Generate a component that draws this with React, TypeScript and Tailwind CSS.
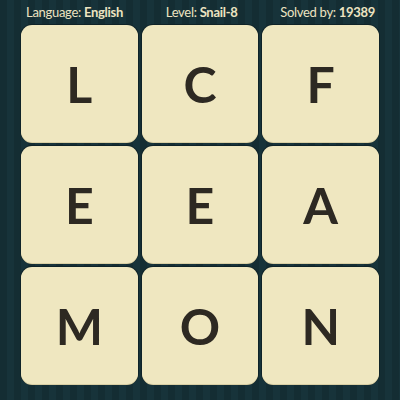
import React from 'react'

const letters = ['L', 'C', 'F', 'E', 'E', 'A', 'M', 'O', 'N']

const Tile: React.FC<{ letter: string }> = ({ letter }) => (
  <div className="h-[117px] rounded-[11px] bg-[#efe7c0] shadow-[0_1px_0_#d9cfa4,0_0_0_1px_#0f2328] flex items-center justify-center">
    <span className="text-[50px] leading-none font-bold text-[#2d2922] [font-family:Lato,'Liberation_Sans',sans-serif]">
      {letter}
    </span>
  </div>
)

const App: React.FC = () => {
  return (
    <div className="w-[400px] h-[400px] flex flex-col bg-[#163136] bg-[repeating-linear-gradient(90deg,#142d33_0px,#142d33_7px,#17333a_7px,#17333a_14px)] [font-family:Lato,'Liberation_Sans',sans-serif]">
      <div className="h-[25px] flex items-center justify-between pl-[26px] pr-[25px] text-[13px] tracking-[-0.3px] text-[#ece3c1]">
        <span>
          Language: <b className="font-bold">English</b>
        </span>
        <span>
          Level: <b className="font-bold">Snail-8</b>
        </span>
        <span>
          Solved by: <b className="font-bold">19389</b>
        </span>
      </div>
      <div className="grid grid-cols-3 gap-1 px-[21px]">
        {letters.map((l, i) => (
          <Tile key={i} letter={l} />
        ))}
      </div>
    </div>
  )
}

export default App
